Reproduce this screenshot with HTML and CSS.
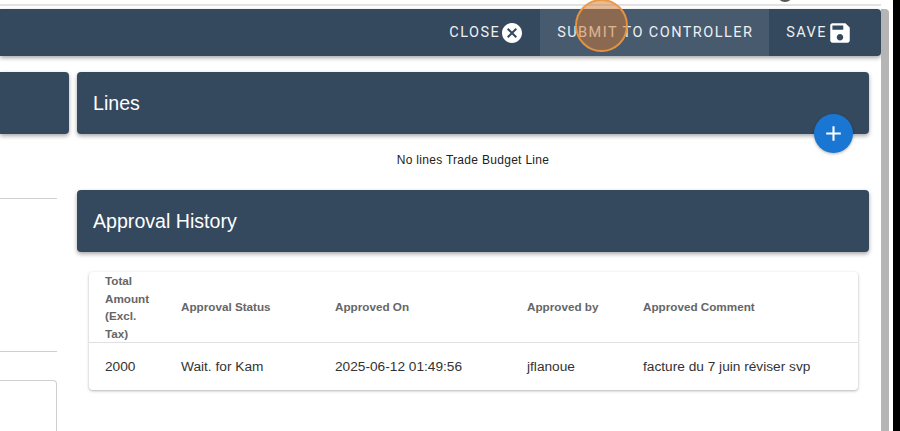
FILE: index.html
```html
<!DOCTYPE html>
<html lang="en">
<head>
    <meta charset="UTF-8">
    <title>Trade Budget</title>
    <link rel="stylesheet" href="styles.css">
</head>
<body>
    <div class="window">
        <div class="page">
            <div class="top-strip"><div class="top-rule"></div></div>
            <div class="toolbar">
                <button class="tool-btn">
                    CLOSE
                    <svg class="tool-icon" viewBox="0 0 24 24"><path d="M12 2C6.47 2 2 6.47 2 12s4.47 10 10 10 10-4.47 10-10S17.53 2 12 2zm5 13.59L15.59 17 12 13.41 8.41 17 7 15.59 10.59 12 7 8.41 8.41 7 12 10.59 15.59 7 17 8.41 13.41 12 17 15.59z"/></svg>
                </button>
                <button class="tool-btn tool-btn-hover">SUBMIT TO CONTROLLER</button>
                <button class="tool-btn">
                    SAVE
                    <svg class="tool-icon tool-icon-save" viewBox="0 0 24 24"><path d="M17 3H5c-1.11 0-2 .9-2 2v14c0 1.1.89 2 2 2h14c1.1 0 2-.9 2-2V7l-4-4zm-5 16c-1.66 0-3-1.34-3-3s1.34-3 3-3 3 1.34 3 3-1.34 3-3 3zm3-10H5V5h10v4z"/></svg>
                </button>
            </div>
            <div class="content">
                <div class="left-col">
                    <div class="panel-head"></div>
                    <div class="field-line line-one"></div>
                    <div class="field-line line-two"></div>
                    <div class="text-box"></div>
                </div>
                <div class="right-col">
                    <div class="lines-block">
                        <div class="panel-head"><h2>Lines</h2></div>
                        <button class="fab">
                            <svg viewBox="0 0 24 24"><path d="M19 13h-6v6h-2v-6H5v-2h6V5h2v6h6v2z"/></svg>
                        </button>
                    </div>
                    <p class="empty-note">No lines Trade Budget Line</p>
                    <div class="panel-head"><h2>Approval History</h2></div>
                    <div class="table-card">
                        <table>
                            <thead>
                                <tr>
                                    <th class="col-amount">Total Amount (Excl. Tax)</th>
                                    <th class="col-status">Approval Status</th>
                                    <th class="col-date">Approved On</th>
                                    <th class="col-by">Approved by</th>
                                    <th>Approved Comment</th>
                                </tr>
                            </thead>
                            <tbody>
                                <tr>
                                    <td>2000</td>
                                    <td>Wait. for Kam</td>
                                    <td>2025-06-12 01:49:56</td>
                                    <td>jflanoue</td>
                                    <td>facture du 7 juin réviser svp</td>
                                </tr>
                            </tbody>
                        </table>
                    </div>
                </div>
            </div>
        </div>
        <div class="scrollbar"></div>
    </div>
    <div class="cursor-arc"></div>
    <div class="click-spot"></div>
</body>
</html>
```

FILE: styles.css
```css
* {
    box-sizing: border-box;
}
html, body {
    height: 100%;
}
body {
    margin: 0;
    background-color: #000;
    font-family: "Liberation Sans", Arial, sans-serif;
    overflow: hidden;
}
.window {
    width: 893px;
    height: 431px;
    background-color: #fff;
    display: flex;
    overflow: hidden;
}
.page {
    width: 881px;
    flex: none;
}
.top-strip {
    height: 9px;
    padding-top: 4px;
}
.top-rule {
    height: 2px;
    background-color: #e2e2e2;
}
.toolbar {
    height: 47px;
    padding-right: 12px;
    background-color: #34495e;
    border-bottom-right-radius: 4px;
    border-top-right-radius: 4px;
    box-shadow: 0 2px 4px rgba(0, 0, 0, 0.35);
    display: flex;
    justify-content: flex-end;
}
.tool-btn {
    height: 100%;
    border: none;
    background: none;
    color: #eef0f2;
    font-family: Roboto, sans-serif;
    font-size: 14.5px;
    font-weight: 400;
    letter-spacing: 1.45px;
    display: flex;
    align-items: center;
    padding: 0 16px 0 17px;
}
.tool-btn-hover {
    background-color: #475a6e;
}
.tool-icon {
    width: 24px;
    height: 24px;
    fill: #fff;
}
.tool-icon-save {
    width: 26px;
    height: 26px;
}
.content {
    display: flex;
    gap: 8px;
    padding-top: 16px;
}
.left-col {
    width: 69px;
    flex: none;
}
.right-col {
    width: 792px;
    flex: none;
}
.panel-head {
    height: 62px;
    background-color: #34495e;
    border-radius: 4px;
    box-shadow: 0 2px 4px rgba(0, 0, 0, 0.35);
    display: flex;
    align-items: center;
    padding: 0 16px;
}
.left-col .panel-head {
    border-top-left-radius: 0;
    border-bottom-left-radius: 0;
}
.panel-head h2 {
    margin: 0;
    color: #fff;
    font-size: 19.6px;
    font-weight: 400;
}
.field-line {
    width: 57px;
    height: 1px;
    background-color: #cfcfcf;
}
.line-one {
    margin-top: 64px;
}
.line-two {
    margin-top: 152px;
}
.text-box {
    width: 57px;
    height: 70px;
    margin-top: 28px;
    border: 1px solid #cfcfcf;
    border-left: none;
    border-top-right-radius: 4px;
}
.lines-block {
    position: relative;
}
.fab {
    position: absolute;
    right: 16px;
    top: 42px;
    width: 39px;
    height: 39px;
    padding: 7px;
    border: none;
    border-radius: 50%;
    background-color: #1976d2;
    box-shadow: 0 1px 3px rgba(0, 0, 0, 0.3);
}
.fab svg {
    display: block;
    width: 25px;
    height: 25px;
    fill: #fff;
}
.empty-note {
    margin: 0;
    height: 56px;
    padding-top: 19px;
    text-align: center;
    font-size: 12px;
    letter-spacing: 0.3px;
    color: #222;
}
.table-card {
    width: 769px;
    margin: 20px 0 0 12px;
    background-color: #fff;
    border-radius: 4px;
    box-shadow: 0 1px 3px rgba(0, 0, 0, 0.3);
}
table {
    width: 100%;
    border-collapse: collapse;
    table-layout: fixed;
}
th {
    padding: 0 16px;
    height: 69px;
    font-size: 11.7px;
    line-height: 17.6px;
    font-weight: 700;
    color: #666;
    text-align: left;
    border-bottom: 1px solid #e0e0e0;
}
td {
    padding: 0 16px;
    height: 47px;
    font-size: 13.7px;
    color: #333;
}
.col-amount {
    width: 76px;
}
.col-status {
    width: 154px;
}
.col-date {
    width: 192px;
}
.col-by {
    width: 116px;
}
.click-spot {
    position: absolute;
    left: 575px;
    top: -1px;
    width: 53px;
    height: 53px;
    border-radius: 50%;
    background-color: rgba(205, 120, 50, 0.5);
    border: 2px solid rgba(240, 150, 60, 0.9);
}
.cursor-arc {
    position: absolute;
    left: 777px;
    top: -14px;
    width: 16px;
    height: 16px;
    border-radius: 50%;
    background-color: #555;
}
.scrollbar {
    width: 8px;
    margin-top: 9px;
    background-color: #b5b5b5;
    border-top-right-radius: 4px;
}
```
